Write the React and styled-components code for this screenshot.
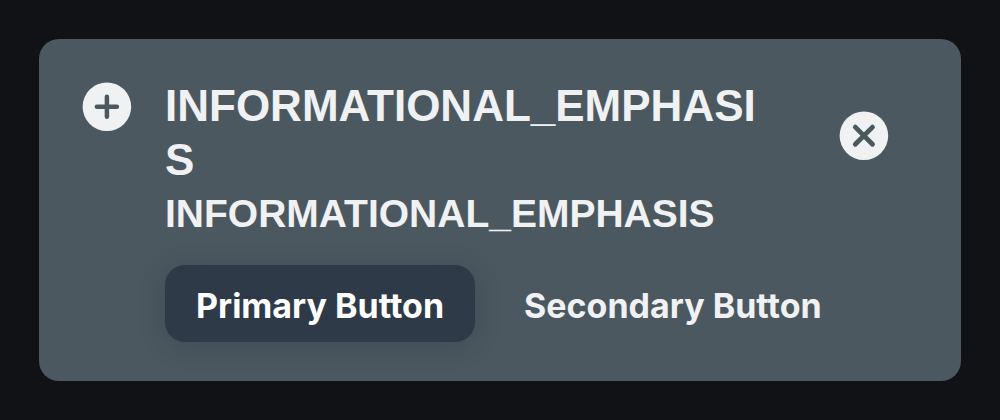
import React from "react";
import styled, { createGlobalStyle } from "styled-components";

const GlobalStyle = createGlobalStyle`
  *, *::before, *::after { box-sizing: border-box; }
  body {
    margin: 0;
    background: #111215;
    font-family: "Liberation Sans", Arial, sans-serif;
  }
`;

const Page = styled.main`
  padding: 39px;
`;

const Banner = styled.section`
  display: flex;
  align-items: flex-start;
  padding: 40px 72px 39px 43px;
  border-radius: 20px;
  background: #4c5860;
  color: #f0f1f3;
`;

const IconSlot = styled.span`
  flex: none;
  display: flex;
  margin: 3px 33px 0 0;
`;

const Content = styled.div`
  flex: 1;
  min-width: 0;
`;

const Copy = styled.div`
  max-width: 600px;
  overflow-wrap: anywhere;
  font-weight: 700;
`;

const Title = styled.h1`
  margin: 0;
  font-size: 44px;
  line-height: 54px;
`;

const Message = styled.p`
  margin: 0;
  font-size: 39px;
  line-height: 54px;
`;

const Actions = styled.div`
  display: flex;
  gap: 18px;
  margin-top: 24px;
`;

const Button = styled.button`
  height: 77px;
  padding: 4px 31px 0;
  border: 0;
  border-radius: 20px;
  background: ${({ $primary }) => ($primary ? "#2e3a48" : "transparent")};
  box-shadow: ${({ $primary }) => ($primary ? "0 4px 24px rgba(35, 47, 58, 0.3)" : "none")};
  color: ${({ $primary }) => ($primary ? "#ffffff" : "#f0f1f3")};
  font: 700 34px/44px Inter, "Liberation Sans", sans-serif;
  white-space: nowrap;
  cursor: pointer;
`;

const CloseButton = styled.button`
  flex: none;
  display: flex;
  margin: 32px 0 0;
  padding: 0;
  border: 0;
  background: none;
  color: inherit;
  cursor: pointer;
`;

function CircleIcon({ path, weight }) {
  return (
    <svg width="50" height="50" viewBox="0 0 50 50" aria-hidden="true">
      <circle cx="24.9" cy="24.7" r="24.3" fill="#f0f1f3" />
      <path d={path} stroke="#4c5860" strokeWidth={weight} strokeLinecap="round" fill="none" />
    </svg>
  );
}

export default function App() {
  return (
    <>
      <GlobalStyle />
      <Page>
        <Banner>
          <IconSlot>
            <CircleIcon path="M24.9 14.7V34.7M14.9 24.7H34.9" weight="4.5" />
          </IconSlot>
          <Content>
            <Copy>
              <Title>INFORMATIONAL_EMPHASIS</Title>
              <Message>INFORMATIONAL_EMPHASIS</Message>
            </Copy>
            <Actions>
              <Button type="button" $primary>Primary Button</Button>
              <Button type="button">Secondary Button</Button>
            </Actions>
          </Content>
          <CloseButton type="button" aria-label="Close">
            <CircleIcon path="M16.3 16.1L33.5 33.3M33.5 16.1L16.3 33.3" weight="4.8" />
          </CloseButton>
        </Banner>
      </Page>
    </>
  );
}
